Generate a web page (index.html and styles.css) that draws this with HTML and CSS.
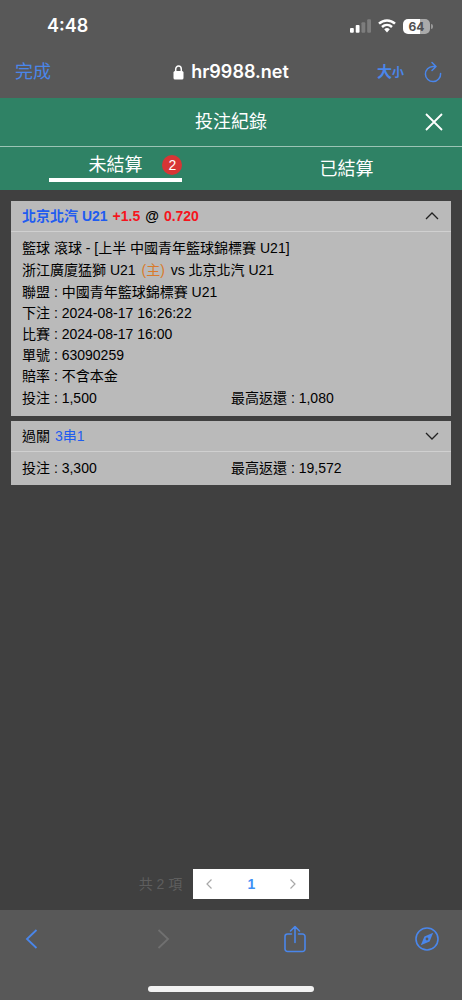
FILE: index.html
```
<!DOCTYPE html>
<html lang="zh-Hant">
<head>
<meta charset="utf-8">
<meta name="viewport" content="width=device-width, initial-scale=1">
<title>投注紀錄</title>
<link rel="stylesheet" href="styles.css">
</head>
<body>
<div class="screen">
  <div class="status">
    <time class="clock">4:48</time>
    <div class="indicators">
      <svg class="signal" viewBox="0 0 22 14" aria-hidden="true">
        <rect x="0" y="9" width="4" height="5" rx="1" fill="#fff"/>
        <rect x="6" y="6" width="4" height="8" rx="1" fill="#fff"/>
        <rect x="12" y="3" width="4" height="11" rx="1" fill="#7d7d7d"/>
        <rect x="18" y="0" width="4" height="14" rx="1" fill="#7d7d7d"/>
      </svg>
      <svg class="wifi" viewBox="0 0 18 14" aria-hidden="true">
        <path d="M1 4.600C5.600.3 12.400.3 17 4.600" fill="none" stroke="#fff" stroke-width="2.500"/>
        <path d="M4 8C6.900 5.300 11.100 5.300 14 8" fill="none" stroke="#fff" stroke-width="2.500"/>
        <path d="M6.200 10.200Q9 8 11.800 10.200L9 13.400Z" fill="#fff"/>
      </svg>
      <div class="battery"><span class="battery-level">64</span></div>
    </div>
  </div>

  <nav class="browser-bar">
    <button class="done" type="button">完成</button>
    <div class="address">
      <svg class="lock" viewBox="0 0 11 15" aria-hidden="true">
        <path d="M2.700 7V4.200a2.800 3.200 0 0 1 5.600 0V7" fill="none" stroke="#fff" stroke-width="1.500"/>
        <rect x="0.500" y="6" width="10" height="8.500" rx="1.500" fill="#fff"/>
      </svg>
      <span>hr9988.net</span>
    </div>
    <div class="browser-tools">
      <button class="text-size" type="button"><span class="size-large">大</span><span class="size-small">小</span></button>
      <button class="icon-button" type="button" aria-label="重新載入">
        <svg class="reload" viewBox="0 0 18 22" aria-hidden="true">
          <path d="M16.600 12.500A7.600 7.600 0 1 1 9 5.400H11.800M8 1.500L12 5.500L8 9.500" fill="none" stroke="currentColor" stroke-width="1.500" stroke-linecap="round" stroke-linejoin="round"/>
        </svg>
      </button>
    </div>
  </nav>

  <header class="header">
    <h1 class="title">投注紀錄</h1>
    <button class="icon-button close" type="button" aria-label="關閉">
      <svg class="close-icon" viewBox="0 0 18 18" aria-hidden="true"><path d="M1 1L17 17M17 1L1 17" stroke="currentColor" stroke-width="1.800" fill="none"/></svg>
    </button>
  </header>

  <div class="tabs" role="tablist">
    <button class="tab tab-active" type="button" role="tab" aria-selected="true">
      <span class="tab-label">未結算<span class="badge">2</span></span>
    </button>
    <button class="tab" type="button" role="tab" aria-selected="false">已結算</button>
  </div>

  <main class="content">
    <article class="card">
      <button class="card-head card-head-strong" type="button" aria-expanded="true">
        <span class="team">北京北汽 U21</span><span class="odds">+1.5</span><span>@</span><span class="odds">0.720</span>
        <svg class="chevron" viewBox="0 0 14 8" aria-hidden="true"><path d="M1 7L7 1L13 7" fill="none" stroke="currentColor" stroke-width="1.300"/></svg>
      </button>
      <div class="card-body">
        <div class="match">
          <p class="line">籃球 滾球 - [上半 中國青年籃球錦標賽 U21]</p>
          <p class="line">浙江廣廈猛獅 U21 <span class="home">(主)</span> vs 北京北汽 U21</p>
          <p class="line">聯盟 : 中國青年籃球錦標賽 U21</p>
        </div>
        <div class="details">
          <p class="line">下注 : 2024-08-17 16:26:22</p>
          <p class="line">比賽 : 2024-08-17 16:00</p>
          <p class="line">單號 : 63090259</p>
          <p class="line">賠率 : 不含本金</p>
        </div>
        <div class="amounts"><span>投注 : 1,500</span><span>最高返還 : 1,080</span></div>
      </div>
    </article>

    <article class="card">
      <button class="card-head" type="button" aria-expanded="false">
        <span>過關</span><span class="team">3串1</span>
        <svg class="chevron" viewBox="0 0 14 8" aria-hidden="true"><path d="M1 1L7 7L13 1" fill="none" stroke="currentColor" stroke-width="1.300"/></svg>
      </button>
      <div class="card-body card-body-short">
        <div class="amounts"><span>投注 : 3,300</span><span>最高返還 : 19,572</span></div>
      </div>
    </article>

    <div class="pagination">
      <span class="total">共 2 項</span>
      <div class="pager">
        <button class="page-step" type="button" aria-label="上一頁"><svg class="page-arrow" viewBox="0 0 6 10" aria-hidden="true"><path d="M5.500.5L1 5L5.500 9.500" fill="none" stroke="currentColor" stroke-width="1.200"/></svg></button>
        <button class="page-current" type="button" aria-current="page">1</button>
        <button class="page-step" type="button" aria-label="下一頁"><svg class="page-arrow" viewBox="0 0 6 10" aria-hidden="true"><path d="M.5.500L5 5L.5 9.500" fill="none" stroke="currentColor" stroke-width="1.200"/></svg></button>
      </div>
    </div>
  </main>

  <footer class="toolbar">
    <div class="toolbar-row">
      <button class="icon-button" type="button" aria-label="返回"><svg class="nav-arrow" viewBox="0 0 12 20" aria-hidden="true"><path d="M11 1L1.500 10L11 19" fill="none" stroke="currentColor" stroke-width="1.800"/></svg></button>
      <button class="icon-button" type="button" aria-label="前進" disabled><svg class="nav-arrow" viewBox="0 0 12 20" aria-hidden="true"><path d="M1 1L10.500 10L1 19" fill="none" stroke="currentColor" stroke-width="1.800"/></svg></button>
      <button class="icon-button" type="button" aria-label="分享">
        <svg class="share" viewBox="0 0 22 28" aria-hidden="true"><path d="M7.500 9H3.500a2.500 2.500 0 0 0-2.500 2.500v12.500a2.500 2.500 0 0 0 2.500 2.500h15a2.500 2.500 0 0 0 2.500-2.500V11.500A2.500 2.500 0 0 0 18.500 9h-4M11 17.500V2M6.500 6L11 1.500L15.500 6" fill="none" stroke="currentColor" stroke-width="1.600" stroke-linecap="round" stroke-linejoin="round"/></svg>
      </button>
      <button class="icon-button" type="button" aria-label="Safari">
        <svg class="compass" viewBox="0 0 24 24" aria-hidden="true"><circle cx="12" cy="12" r="11" fill="none" stroke="currentColor" stroke-width="1.600"/><path d="M18.200 5.800L14.600 14.400L5.800 18.200L9.400 9.600ZM12 10.600a1.400 1.400 0 1 0 0 2.800a1.400 1.400 0 1 0 0-2.800Z" fill="currentColor" fill-rule="evenodd"/></svg>
      </button>
    </div>
    <div class="home-bar"></div>
  </footer>
</div>
</body>
</html>
```
FILE: styles.css
```
* {
  box-sizing: border-box;
}

body {
  margin: 0;
  background: #404040;
  color: #000;
  font: 14px/22px "Liberation Sans", "Noto Sans CJK TC", sans-serif;
}

button {
  margin: 0;
  padding: 0;
  border: 0;
  background: none;
  color: inherit;
  font: inherit;
}

svg {
  display: block;
}

.screen {
  display: flex;
  flex-direction: column;
  min-height: 100vh;
}

/* Phone status bar */
.status {
  display: flex;
  justify-content: space-between;
  align-items: center;
  height: 52px;
  padding: 0 32px 0 47px;
  background: #585858;
  color: #fff;
}

.clock {
  font: 600 18px/22px Inter, sans-serif;
}

.indicators {
  display: flex;
  align-items: center;
  gap: 7px;
}

.signal {
  width: 21px;
  height: 14px;
}

.wifi {
  width: 18px;
  height: 14px;
}

.battery {
  position: relative;
  width: 27px;
  height: 15px;
  border-radius: 5px;
  background: linear-gradient(90deg, #fff 64%, #aaa 64%);
  color: #505050;
  text-align: center;
}

.battery::after {
  content: "";
  position: absolute;
  top: 5px;
  right: -3px;
  width: 2px;
  height: 5px;
  border-radius: 0 2px 2px 0;
  background: #999;
}

.battery-level {
  display: block;
  font: 700 12px/15px Inter, sans-serif;
}

/* Browser address bar */
.browser-bar {
  display: grid;
  grid-template-columns: 1fr auto 1fr;
  align-items: center;
  height: 46px;
  padding: 0 15px 6px;
  background: #585858;
  color: #4a86ea;
}

.done {
  justify-self: start;
  font-size: 18px;
}

.address {
  display: flex;
  align-items: center;
  gap: 7px;
  color: #fff;
  font: 600 18px/22px Inter, sans-serif;
}

.lock {
  width: 11px;
  height: 15px;
}

.browser-tools {
  display: flex;
  justify-content: flex-end;
  align-items: center;
  gap: 20px;
  padding-right: 5px;
}

.text-size {
  display: flex;
  align-items: baseline;
  font-weight: 700;
}

.size-large {
  font-size: 15px;
}

.size-small {
  font-size: 12px;
}

.reload {
  width: 18px;
  height: 22px;
}

/* Page header */
.header {
  display: grid;
  grid-template-columns: 1fr auto 1fr;
  align-items: center;
  height: 49px;
  padding: 0 19px;
  border-bottom: 1px solid #9cc4b5;
  background: #2f8265;
  color: #fff;
}

.title {
  grid-column: 2;
  margin: 0;
  font-size: 18px;
  font-weight: 400;
}

.close {
  justify-self: end;
}

.close-icon {
  width: 18px;
  height: 18px;
}

.tabs {
  display: grid;
  grid-template-columns: 1fr 1fr;
  height: 43px;
  background: #2f8265;
  color: #fff;
}

.tab {
  font-size: 18px;
}

.tab-active {
  display: flex;
  justify-content: center;
  align-items: flex-start;
}

.tab-label {
  position: relative;
  width: 58%;
  padding: 7px 0 2px;
  border-bottom: 4px solid #fff;
}

.badge {
  position: absolute;
  top: 8px;
  right: 0;
  width: 20px;
  height: 20px;
  border-radius: 50%;
  background: #d83535;
  font-size: 14px;
  line-height: 20px;
}

/* Bet list */
.content {
  display: flex;
  flex: 1;
  flex-direction: column;
  gap: 5px;
  padding: 11px;
}

.card {
  background: #bababa;
}

.card-head {
  display: flex;
  align-items: center;
  gap: 5px;
  width: 100%;
  height: 31px;
  padding: 0 12px 1px 11px;
  border-bottom: 1px solid #d0d0d0;
}

.card-head-strong {
  font-weight: 700;
}

.team {
  color: #1f5cf0;
}

.odds {
  color: #f5141d;
}

.chevron {
  width: 14px;
  height: 8px;
  margin-left: auto;
  color: #222;
}

.card-body {
  padding: 5px 11px 7px;
}

.card-body-short {
  padding-bottom: 6px;
}

.line {
  margin: 0;
}

.details {
  line-height: 21px;
}

.home {
  margin: 0 2px;
  color: #d97a2b;
}

.amounts {
  display: grid;
  grid-template-columns: 1fr 1fr;
}

/* Pagination */
.pagination {
  display: flex;
  justify-content: center;
  align-items: center;
  gap: 11px;
  margin-top: auto;
  padding-right: 14px;
}

.total {
  color: #5e5e5e;
}

.pager {
  display: grid;
  grid-template-columns: 32px 52px 32px;
  height: 30px;
  background: #fff;
}

.page-step {
  display: flex;
  justify-content: center;
  align-items: center;
  color: #a8a8a8;
}

.page-current {
  color: #3f90f5;
  font-weight: 700;
}

.page-arrow {
  width: 6px;
  height: 10px;
}

/* Browser toolbar */
.toolbar {
  padding: 14px 0 8px;
  background: #585858;
  color: #4a86ea;
}

.toolbar-row {
  display: flex;
  justify-content: space-between;
  align-items: center;
  height: 30px;
  padding: 0 23px 0 19px;
}

.toolbar-row .icon-button {
  display: flex;
  justify-content: center;
  width: 24px;
}

.icon-button:disabled {
  color: #707070;
}

.nav-arrow {
  width: 13px;
  height: 20px;
}

.share {
  width: 22px;
  height: 28px;
}

.compass {
  width: 24px;
  height: 24px;
}

.home-bar {
  width: 36%;
  height: 6px;
  margin: 32px auto 0;
  border-radius: 3px;
  background: #f2f2f2;
}
```
